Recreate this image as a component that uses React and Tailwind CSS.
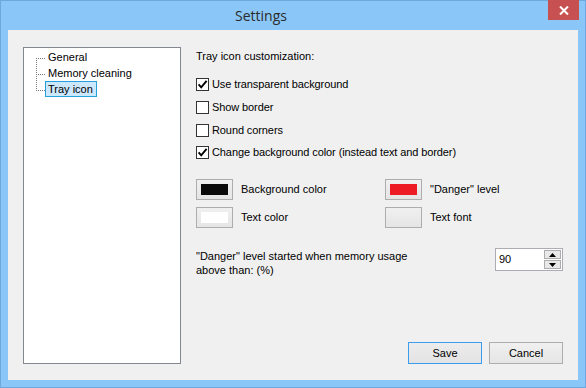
import React from 'react';

const font = { fontFamily: '"Liberation Sans", Arial, sans-serif' };

const Tick = () => (
  <svg width="11" height="11" viewBox="0 0 11 11">
    <path d="M1.6 5.4 L4.2 8.3 L9.6 1.8" fill="none" stroke="#000" strokeWidth="1.9" />
  </svg>
);

const CheckRow = ({ checked, label, className }) => (
  <div className={`flex items-center h-[13px] ${className}`}>
    <span className="w-[13px] h-[13px] border border-[#333333] bg-white flex items-center justify-center shrink-0">
      {checked && <Tick />}
    </span>
    <span className="ml-[3px] leading-[13px] tracking-[-0.1px]">{label}</span>
  </div>
);

const ColorButton = ({ swatch, label }) => (
  <div className="flex items-center">
    <div className="w-[37px] h-[21px] border border-[#adadad] bg-gradient-to-b from-[#f0f0f0] to-[#e5e5e5] flex items-center justify-center">
      {swatch && <span className={`w-[27px] h-[11px] ${swatch}`} />}
    </div>
    <span className="ml-[8px]">{label}</span>
  </div>
);

const SpinArrow = ({ up }) => (
  <svg width="7" height="4" viewBox="0 0 7 4">
    <path d={up ? 'M0 4 L3.5 0 L7 4 Z' : 'M0 0 L3.5 4 L7 0 Z'} fill="#000" />
  </svg>
);

const TreeLines = () => (
  <svg width="12" height="36" viewBox="0 0 12 36" className="shrink-0">
    <g fill="#7a7a7a">
      {[0, 2, 4, 6, 8, 10, 12, 14, 16, 18, 20, 22, 24, 26, 28, 30, 32].map((y) => (
        <rect key={'v' + y} x="1" y={y + 1} width="1" height="1" />
      ))}
      {[0, 16, 32].map((y) =>
        [3, 5, 7, 9].map((x) => <rect key={x + '-' + y} x={x} y={y + 1} width="1" height="1" />)
      )}
    </g>
  </svg>
);

export default function App() {
  return (
    <div className="w-[586px] h-[388px] bg-[#8ac6f8] border border-[#6ea8de] flex flex-col text-[11px] text-black" style={font}>
      <div className="h-[29px] flex shrink-0">
        <div className="w-[520px] flex justify-center items-center pb-[1px]">
          <span className="text-[14px] text-[#2b2b2b]" style={{ fontFamily: '"Open Sans", "Noto Sans", sans-serif' }}>Settings</span>
        </div>
        <div className="ml-auto mr-[6px] w-[31px] h-[20px] -mt-[1px] bg-[#c75050] flex items-center justify-center">
          <svg width="10" height="9" viewBox="0 0 10 9">
            <path d="M1 0.5 L9 8.5 M9 0.5 L1 8.5" stroke="#fff" strokeWidth="2" />
          </svg>
        </div>
      </div>

      <div className="ml-[7px] w-[570px] h-[350px] bg-[#f0f0f0] flex pl-[15px] pt-[17px] pr-[15px] pb-[16px]">
        <div className="w-[158px] h-[317px] border border-[#828790] bg-white shrink-0 pl-[11px] pt-[1px]">
          <div className="flex">
            <div className="pt-[8px]">
              <TreeLines />
            </div>
            <div className="flex flex-col -ml-[2px]">
              <div className="h-[16px] flex items-center pl-[3px]">General</div>
              <div className="h-[16px] flex items-center pl-[3px]">Memory cleaning</div>
              <div className="h-[16px] flex items-center pl-[2px] pr-[3px] border border-[#26a0da] bg-[#cce8ff] self-start">Tray icon</div>
            </div>
          </div>
        </div>

        <div className="ml-[15px] flex-1 flex flex-col">
          <div className="mt-[3px] leading-[13px]">Tray icon customization:</div>
          <CheckRow checked label="Use transparent background" className="mt-[15px]" />
          <CheckRow label="Show border" className="mt-[10px]" />
          <CheckRow label="Round corners" className="mt-[10px]" />
          <CheckRow checked label="Change background color (instead text and border)" className="mt-[9px]" />

          <div className="mt-[20px] grid grid-cols-[189px_auto] gap-y-[7px]">
            <ColorButton swatch="bg-[#0a0a0a]" label="Background color" />
            <ColorButton swatch="bg-[#ed1c24]" label={'"Danger" level'} />
            <ColorButton swatch="bg-white" label="Text color" />
            <ColorButton label="Text font" />
          </div>

          <div className="mt-[20px] flex justify-between items-start">
            <div className="w-[230px] leading-[14px] pt-[1px]">
              "Danger" level started when memory usage above than: (%)
            </div>
            <div className="w-[68px] h-[23px] border border-[#abadb3] bg-white flex">
              <div className="flex-1 pl-[3px] flex items-center">90</div>
              <div className="w-[17px] mr-[1px] py-[1px] flex flex-col gap-[1px]">
                <div className="h-[9px] border border-[#acacac] bg-[#e8e8e8] flex items-center justify-center">
                  <SpinArrow up />
                </div>
                <div className="h-[9px] border border-[#acacac] bg-[#e8e8e8] flex items-center justify-center">
                  <SpinArrow />
                </div>
              </div>
            </div>
          </div>

          <div className="mt-auto flex justify-end gap-[7px]">
            <button className="w-[74px] h-[22px] border border-[#3c9cf0] bg-gradient-to-b from-[#ececec] to-[#e3e3e3] text-[11px]">Save</button>
            <button className="w-[74px] h-[22px] border border-[#adadad] bg-gradient-to-b from-[#f0f0f0] to-[#e5e5e5] text-[11px]">Cancel</button>
          </div>
        </div>
      </div>
    </div>
  );
}
